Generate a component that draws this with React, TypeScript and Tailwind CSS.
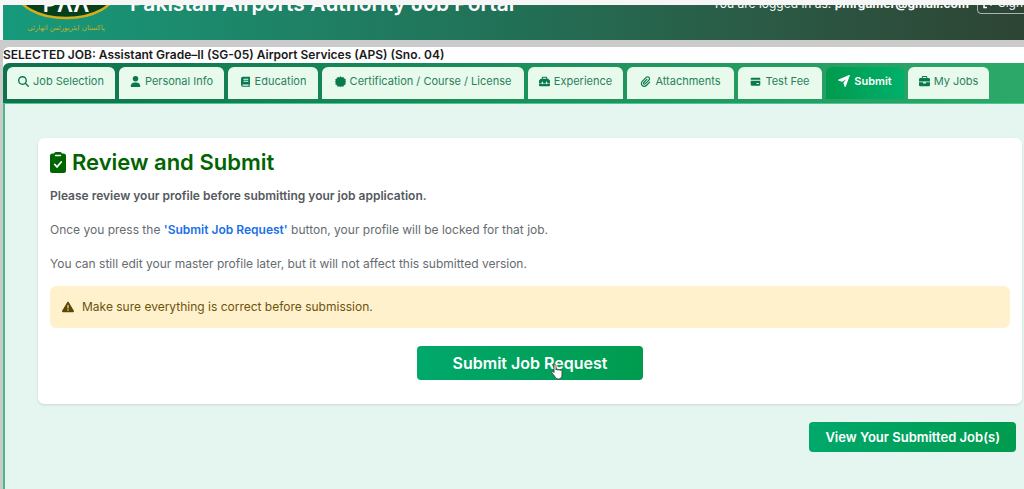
import type { IconType } from "react-icons";
import {
    FaBriefcase,
    FaMagnifyingGlass,
    FaPaperclip,
    FaToolbox,
    FaTriangleExclamation,
    FaUser,
} from "react-icons/fa6";

type Tab = {
    label: string;
    icon: IconType | typeof CardIcon;
    width: string;
    active?: boolean;
};

function CardIcon({ className }: { className?: string }) {
    return (
        <svg viewBox="0 0 16 16" className={className} fill="currentColor" aria-hidden="true">
            <path d="M2.500 2.500h11a1.500 1.500 0 0 1 1.500 1.500v1.500H1V4a1.500 1.500 0 0 1 1.500-1.500zM1 7h14v5.500a1.500 1.500 0 0 1-1.500 1.500h-11A1.500 1.500 0 0 1 1 12.500zm8.500 3v1.500h3.500V10z" fillRule="evenodd" />
        </svg>
    );
}

function BookIcon({ className }: { className?: string }) {
    return (
        <svg viewBox="0 0 16 16" className={className} fill="currentColor" aria-hidden="true">
            <path
                d="M4 1h10.500v11.500H14V14h.5v1.500H4A2.500 2.500 0 0 1 1.500 13V3.500A2.500 2.500 0 0 1 4 1zm1 3v1.500h7V4zm0 3v1.500h7V7zM4 12.500a.8.8 0 0 0 0 1.500h8.500v-1.500z"
                fillRule="evenodd"
            />
        </svg>
    );
}

function BadgeIcon({ className }: { className?: string }) {
    return (
        <svg viewBox="0 0 16 16" className={className} fill="currentColor" stroke="currentColor" strokeLinejoin="round" aria-hidden="true">
            <path d="M8 1l1.800 1.400L12 1.900l.9 2.100 2.100.9-.5 2.200L16 8l-1.500 1.800.5 2.200-2.100.9-.9 2.100-2.200-.5L8 15.500l-1.800-1-2.200.5-.9-2.100L1 12l.5-2.200L.5 8l1-1.800L1 4.900 3.100 4 4 1.900l2.200.5z" />
        </svg>
    );
}

function SendIcon({ className }: { className?: string }) {
    return (
        <svg viewBox="0 0 16 16" className={className} fill="currentColor" aria-hidden="true">
            <path d="M15.800.8L10.300 15.300c-.3.800-1.300.8-1.600 0L7.200 10.200 10.800 5.500 5.600 9 .8 7.600C0 7.300 0 6.300.8 6L14.800.1c.7-.3 1.200.1 1 .7z" />
        </svg>
    );
}

function ClipboardIcon() {
    return (
        <svg viewBox="0 0 16 21" className="h-[21px] w-4 shrink-0" aria-hidden="true">
            <path fill="#006400" d="M2.500 1.500H4a2 2 0 0 1 2-1.500h4a2 2 0 0 1 2 1.500h1.500A2.500 2.500 0 0 1 16 4v14.500a2.500 2.500 0 0 1-2.500 2.500h-11A2.500 2.500 0 0 1 0 18.500V4a2.500 2.500 0 0 1 2.500-2.500z" />
            <path fill="none" stroke="#fff" strokeWidth="1.500" strokeLinecap="round" d="M5.500 3.500h5" />
            <path fill="none" stroke="#fff" strokeWidth="1.800" strokeLinecap="round" strokeLinejoin="round" d="M4.800 12.500l2.200 2.500 4.200-5" />
        </svg>
    );
}

function Pointer() {
    return (
        <svg viewBox="0 0 12 16" className="absolute right-20 bottom-0 h-4 w-3" aria-hidden="true">
            <path
                d="M3 1.500c0-1.300 2-1.300 2 0V6c0-1 2-1 2 .3 0-1 2-1 2 .3 0-.9 2-.9 2 .5V11c0 2.500-1.500 4-3.500 4S4.500 14 3.500 12L1 9c-.8-1 .5-2 1.300-1.200L3 8.500z"
                fill="#fff"
                stroke="#333"
                strokeWidth=".8"
            />
        </svg>
    );
}

const TABS: Tab[] = [
    { label: "Job Selection", icon: FaMagnifyingGlass, width: "w-[108px]" },
    { label: "Personal Info", icon: FaUser, width: "w-[105px]" },
    { label: "Education", icon: BookIcon, width: "w-[90px]" },
    { label: "Certification / Course / License", icon: BadgeIcon, width: "w-[202px]" },
    { label: "Experience", icon: FaToolbox, width: "w-[95px]" },
    { label: "Attachments", icon: FaPaperclip, width: "w-[107px]" },
    { label: "Test Fee", icon: CardIcon, width: "w-[84px]" },
    { label: "Submit", icon: SendIcon, width: "w-[78px]", active: true },
    { label: "My Jobs", icon: FaBriefcase, width: "w-[81px]" },
];

function Logo() {
    return (
        <div className="flex w-[104px] flex-col items-center">
            <svg viewBox="0 0 104 60" className="h-[60px] w-[104px]" aria-hidden="true">
                <ellipse cx="52" cy="30" rx="50" ry="28" fill="#063f1c" stroke="#d3ae1c" strokeWidth="2.500" />
                <text x="52" y="52" textAnchor="middle" fill="#fff" fontSize="22" fontWeight="600">
                    PΛΛ
                </text>
            </svg>
            <span className="font-['DejaVu_Sans',sans-serif] text-[7px] leading-4 whitespace-nowrap text-[#c2b02c] [direction:rtl]">
                پاکستان ایئرپورٹس اتھارٹی
            </span>
        </div>
    );
}

function Header() {
    return (
        <header className="flex h-[35px] items-end overflow-hidden bg-linear-to-r from-[#159a7b] via-[#217056] to-[#2d4434]">
            <div className="flex w-full items-end whitespace-nowrap text-white">
                <div className="shrink-0 pb-1 pl-[11px]">
                    <Logo />
                </div>
                <h1 className="mb-6 ml-3 text-[21px] leading-6 font-semibold">Pakistan Airports Authority Job Portal</h1>
                <p className="mb-6 ml-auto text-xs leading-6">
                    You are logged in as: <strong>pmrgamer@gmail.com</strong>
                </p>
                <button
                    type="button"
                    className="-mr-1 mb-[26px] ml-2 flex items-center gap-1 rounded-sm border border-white/60 px-1 text-xs leading-5"
                >
                    <svg viewBox="0 0 12 12" className="size-3" fill="none" stroke="currentColor" strokeWidth="1.500" aria-hidden="true">
                        <path d="M5 1.500H2v9h3M5 6h6M8.500 3.500L11 6l-2.500 2.500" />
                    </svg>
                    Sign
                </button>
            </div>
        </header>
    );
}

function Tabs() {
    return (
        <nav className="flex gap-1 rounded-tl-md border-b border-[#4bc896] bg-linear-to-r from-[#0e724d] via-[#1a905b] to-[#2ca968] px-1 pt-1 pb-1">
            {TABS.map(({ label, icon: Icon, width, active }) => (
                <button
                    key={label}
                    type="button"
                    className={`flex h-8 items-center justify-center gap-1 rounded-t-md pb-1 text-[11px] whitespace-nowrap ${width} ${
                        active
                            ? "bg-linear-to-r from-[#009b4e] to-[#00b06a] font-semibold text-white"
                            : "bg-[#e8faec] text-[#28805f]"
                    }`}
                >
                    <Icon className={active ? "size-3 shrink-0" : "size-[11px] shrink-0 text-[#08794f]"} />
                    {label}
                </button>
            ))}
        </nav>
    );
}

function ReviewCard() {
    return (
        <section className="rounded-md bg-white px-3 pt-3 pb-6 text-xs leading-5 text-[#666b70] shadow-sm">
            <h2 className="mb-3 flex items-center gap-1.5 text-[22px] leading-6 font-semibold text-[#006400]">
                <ClipboardIcon />
                Review and Submit
            </h2>
            <p className="mb-3.5 font-semibold text-[#55595e]">Please review your profile before submitting your job application.</p>
            <p className="mb-3.5">
                Once you press the <strong className="font-semibold text-[#1a6fe8]">'Submit Job Request'</strong> button, your profile will be
                locked for that job.
            </p>
            <p className="mb-3">You can still edit your master profile later, but it will not affect this submitted version.</p>
            <div role="alert" className="mb-[18px] flex items-center gap-2 rounded-md bg-[#fff1cc] px-3 py-[11px] text-[#6b5410]">
                <FaTriangleExclamation className="size-3 shrink-0 text-[#5c4700]" />
                Make sure everything is correct before submission.
            </div>
            <div className="flex justify-center">
                <button
                    type="button"
                    className="relative rounded-sm bg-linear-to-r from-[#00a86b] to-[#009b4e] px-9 py-[5px] text-base leading-6 font-semibold text-white"
                >
                    Submit Job Request
                    <Pointer />
                </button>
            </div>
        </section>
    );
}

export default function App() {
    return (
        <div className="min-h-screen bg-[#f6f6f6] pt-[5px] font-['Inter',sans-serif]">
            <div className="pl-[3px]">
                <Header />
            </div>
            <div className="bg-[#cbcbcb] pt-[7px] pl-[3px]">
                <div className="rounded-tl-md bg-white">
                    <p className="text-xs leading-4 font-semibold text-[#1a1a1a]">
                        SELECTED JOB: Assistant Grade–II (SG-05) Airport Services (APS) (Sno. 04)
                    </p>
                    <Tabs />
                </div>
                <main className="min-h-[calc(100vh-104px)] border-l-2 border-[#4bb88a] bg-[#e5f5ef] pt-[34px] pr-0.5 pl-[33px]">
                    <ReviewCard />
                    <div className="mt-[18px] flex justify-end pr-1.5">
                        <button
                            type="button"
                            className="rounded-sm bg-linear-to-r from-[#00a86b] to-[#009b4e] px-4 py-[5px] text-[13px] leading-5 font-semibold text-white"
                        >
                            View Your Submitted Job(s)
                        </button>
                    </div>
                </main>
            </div>
        </div>
    );
}
